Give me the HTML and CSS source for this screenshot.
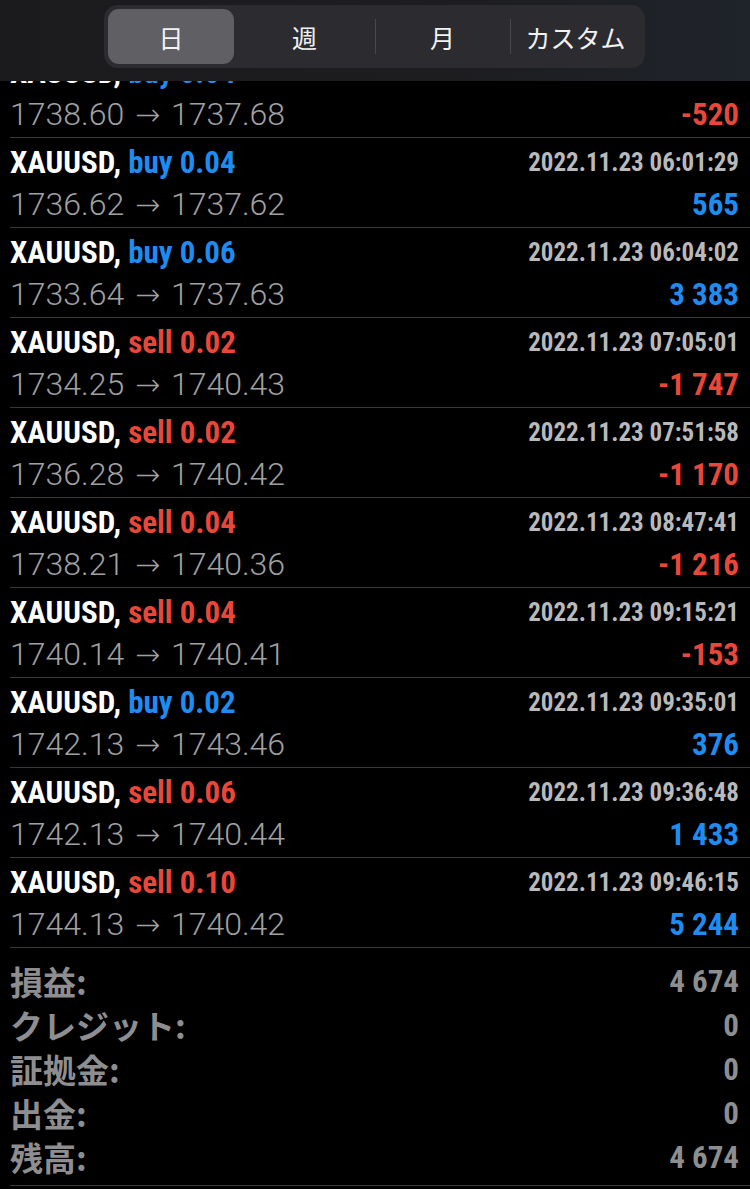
FILE: index.html
```html
<!DOCTYPE html>
<html lang="ja">
<head>
    <meta charset="UTF-8">
    <meta name="viewport" content="width=device-width, initial-scale=1.0">
    <title>履歴</title>
    <link rel="stylesheet" href="styles.css">
</head>
<body>
    <div class="topbar">
        <div class="segments">
            <div class="seg active">日</div>
            <div class="seg">週</div>
            <div class="seg sep">月</div>
            <div class="seg sep">カスタム</div>
        </div>
    </div>

    <div class="deals">
        <div class="deal">
            <div class="line">
                <span class="sym">XAUUSD, <span class="buy">buy 0.04</span></span>
                <span class="time">2022.11.23 05:48:12</span>
            </div>
            <div class="line">
                <span class="price">1738.60 <span class="arrow">→</span> 1737.68</span>
                <span class="profit sell">-520</span>
            </div>
        </div>
        <div class="deal">
            <div class="line">
                <span class="sym">XAUUSD, <span class="buy">buy 0.04</span></span>
                <span class="time">2022.11.23 06:01:29</span>
            </div>
            <div class="line">
                <span class="price">1736.62 <span class="arrow">→</span> 1737.62</span>
                <span class="profit buy">565</span>
            </div>
        </div>
        <div class="deal">
            <div class="line">
                <span class="sym">XAUUSD, <span class="buy">buy 0.06</span></span>
                <span class="time">2022.11.23 06:04:02</span>
            </div>
            <div class="line">
                <span class="price">1733.64 <span class="arrow">→</span> 1737.63</span>
                <span class="profit buy">3 383</span>
            </div>
        </div>
        <div class="deal">
            <div class="line">
                <span class="sym">XAUUSD, <span class="sell">sell 0.02</span></span>
                <span class="time">2022.11.23 07:05:01</span>
            </div>
            <div class="line">
                <span class="price">1734.25 <span class="arrow">→</span> 1740.43</span>
                <span class="profit sell">-1 747</span>
            </div>
        </div>
        <div class="deal">
            <div class="line">
                <span class="sym">XAUUSD, <span class="sell">sell 0.02</span></span>
                <span class="time">2022.11.23 07:51:58</span>
            </div>
            <div class="line">
                <span class="price">1736.28 <span class="arrow">→</span> 1740.42</span>
                <span class="profit sell">-1 170</span>
            </div>
        </div>
        <div class="deal">
            <div class="line">
                <span class="sym">XAUUSD, <span class="sell">sell 0.04</span></span>
                <span class="time">2022.11.23 08:47:41</span>
            </div>
            <div class="line">
                <span class="price">1738.21 <span class="arrow">→</span> 1740.36</span>
                <span class="profit sell">-1 216</span>
            </div>
        </div>
        <div class="deal">
            <div class="line">
                <span class="sym">XAUUSD, <span class="sell">sell 0.04</span></span>
                <span class="time">2022.11.23 09:15:21</span>
            </div>
            <div class="line">
                <span class="price">1740.14 <span class="arrow">→</span> 1740.41</span>
                <span class="profit sell">-153</span>
            </div>
        </div>
        <div class="deal">
            <div class="line">
                <span class="sym">XAUUSD, <span class="buy">buy 0.02</span></span>
                <span class="time">2022.11.23 09:35:01</span>
            </div>
            <div class="line">
                <span class="price">1742.13 <span class="arrow">→</span> 1743.46</span>
                <span class="profit buy">376</span>
            </div>
        </div>
        <div class="deal">
            <div class="line">
                <span class="sym">XAUUSD, <span class="sell">sell 0.06</span></span>
                <span class="time">2022.11.23 09:36:48</span>
            </div>
            <div class="line">
                <span class="price">1742.13 <span class="arrow">→</span> 1740.44</span>
                <span class="profit buy">1 433</span>
            </div>
        </div>
        <div class="deal">
            <div class="line">
                <span class="sym">XAUUSD, <span class="sell">sell 0.10</span></span>
                <span class="time">2022.11.23 09:46:15</span>
            </div>
            <div class="line">
                <span class="price">1744.13 <span class="arrow">→</span> 1740.42</span>
                <span class="profit buy">5 244</span>
            </div>
        </div>
    </div>

    <div class="summary">
        <div class="sum-row"><span class="label">損益:</span><span class="value">4 674</span></div>
        <div class="sum-row"><span class="label">クレジット:</span><span class="value">0</span></div>
        <div class="sum-row"><span class="label">証拠金:</span><span class="value">0</span></div>
        <div class="sum-row"><span class="label">出金:</span><span class="value">0</span></div>
        <div class="sum-row"><span class="label">残高:</span><span class="value">4 674</span></div>
    </div>
</body>
</html>
```

FILE: styles.css
```css
body {
    margin: 0;
    background-color: #000;
    color: #fff;
    font-family: "Liberation Sans", Arial, sans-serif;
    overflow: hidden;
}
.topbar {
    position: fixed;
    top: 0;
    left: 0;
    right: 0;
    height: 81px;
    background: linear-gradient(90deg, #1b1b1d 0%, #1d1d20 60%, #1f232a 100%);
    z-index: 2;
}
.segments {
    display: grid;
    grid-template-columns: 126px 141px 135px 131px;
    width: 533px;
    margin: 5px 0 0 104px;
    padding: 4px;
    background-color: #2c2c30;
    border-radius: 14px;
}
.seg {
    height: 55px;
    display: flex;
    justify-content: center;
    align-items: center;
    font-family: "Noto Sans CJK JP", sans-serif;
    font-size: 25px;
    color: #f2f2f2;
    position: relative;
}
.seg.active {
    background-color: #5f5f64;
    border-radius: 11px;
}
.seg.sep:before {
    content: "";
    position: absolute;
    left: 0;
    top: 10px;
    height: 35px;
    width: 1px;
    background-color: #48484c;
}
.deals {
    padding-top: 48px;
}
.deal {
    margin-left: 10px;
    height: 81px;
    padding: 8px 11px 0 0;
    border-bottom: 1px solid #38383a;
}
.line {
    display: flex;
    justify-content: space-between;
    align-items: center;
    height: 32px;
}
.line + .line {
    height: 36px;
    margin-top: 8px;
}
.sym {
    font-family: Roboto, sans-serif;
    font-stretch: condensed;
    font-weight: bold;
    font-size: 31px;
    color: #fff;
}
.time {
    font-family: Roboto, sans-serif;
    font-stretch: condensed;
    font-weight: bold;
    font-size: 25px;
    color: #b9b9bb;
}
.price {
    font-family: Roboto, sans-serif;
    font-weight: 300;
    font-size: 32px;
    color: #a0a0a2;
}
.arrow {
    font-family: "DejaVu Sans", sans-serif;
    font-weight: 200;
    font-size: 30px;
    margin: 0 3px;
}
.profit {
    font-family: Roboto, sans-serif;
    font-stretch: condensed;
    font-weight: bold;
    font-size: 31px;
}
.buy {
    color: #1e8cf0;
}
.sell {
    color: #e8473a;
}
.summary {
    margin-left: 10px;
    padding: 11px 11px 6px 0;
    border-bottom: 1px solid #38383a;
}
.sum-row {
    display: flex;
    justify-content: space-between;
    align-items: center;
    height: 44px;
}
.label {
    font-family: "Noto Sans CJK JP", sans-serif;
    font-weight: bold;
    font-size: 33px;
    color: #8e8e90;
}
.value {
    font-family: Roboto, sans-serif;
    font-stretch: condensed;
    font-weight: bold;
    font-size: 31px;
    color: #8e8e90;
}
```
